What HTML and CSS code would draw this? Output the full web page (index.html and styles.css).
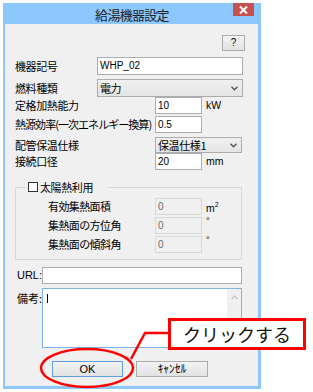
FILE: index.html
```html
<!DOCTYPE html>
<html lang="ja">
<head>
<meta charset="utf-8">
<title>給湯機器設定</title>
<link rel="stylesheet" href="styles.css">
</head>
<body>
<div class="window">
  <div class="titlebar">
    <span></span>
    <div class="title">給湯機器設定</div>
    <div class="close">
      <svg width="9" height="8" viewBox="0 0 9 8"><path d="M1 0.5 L8 7.5 M8 0.5 L1 7.5" stroke="#fff" stroke-width="2" fill="none"/></svg>
    </div>
  </div>
  <div class="client">
    <div class="help-row"><div class="btn help">?</div></div>
    <div class="form">
      <div class="row"><span class="lbl">機器記号</span><div class="field wide">WHP_02</div></div>
      <div class="row"><span class="lbl">燃料種類</span><div class="combo wide"><span>電力</span><svg class="chev" width="7" height="5" viewBox="0 0 7 5"><path d="M0.5 0.8 L3.5 3.8 L6.5 0.8" stroke="#555" stroke-width="1.4" fill="none"/></svg></div></div>
      <div class="row"><span class="lbl lbl-s">定格加熱能力</span><div class="field short">10</div><span class="unit">kW</span></div>
      <div class="row"><span class="lbl lbl-s tight">熱源効率(一次エネルギー換算)</span><div class="field short">0.5</div></div>
      <div class="row"><span class="lbl lbl-s">配管保温仕様</span><div class="combo mid"><span>保温仕様1</span><svg class="chev" width="7" height="5" viewBox="0 0 7 5"><path d="M0.5 0.8 L3.5 3.8 L6.5 0.8" stroke="#555" stroke-width="1.4" fill="none"/></svg></div></div>
      <div class="row"><span class="lbl lbl-s">接続口径</span><div class="field short">20</div><span class="unit">mm</span></div>
    </div>
    <div class="group">
      <div class="legend"><span class="check"></span><span>太陽熱利用</span></div>
      <div class="grp-rows">
        <div class="row"><span class="lbl lbl-g">有効集熱面積</span><div class="field short dis">0</div><span class="unit">m<sup>2</sup></span></div>
        <div class="row"><span class="lbl lbl-g">集熱面の方位角</span><div class="field short dis">0</div><span class="unit deg">°</span></div>
        <div class="row"><span class="lbl lbl-g">集熱面の傾斜角</span><div class="field short dis">0</div><span class="unit deg">°</span></div>
      </div>
    </div>
    <div class="url-row"><span class="lbl-r">URL:</span><div class="field url"></div></div>
    <div class="note-row"><span class="lbl-r note-lbl">備考:</span>
      <div class="memo">
        <div class="memo-text"><span class="caret"></span></div>
        <div class="vscroll"><svg width="7" height="5" viewBox="0 0 7 5"><path d="M0.5 4 L3.5 1 L6.5 4" stroke="#c4c4c4" stroke-width="1.4" fill="none"/></svg></div>
      </div>
    </div>
    <div class="btn-row">
      <div class="btn ok">OK</div>
      <div class="btn cancel">ｷｬﾝｾﾙ</div>
    </div>
  </div>
</div>
<svg class="annot" width="313" height="392" viewBox="0 0 313 392">
  <ellipse cx="87" cy="368" rx="46" ry="19" fill="none" stroke="#ff0000" stroke-width="2.5"/>
  <polyline points="131,359 145,333 170,333" fill="none" stroke="#ff0000" stroke-width="2.5"/>
</svg>
<div class="callout">クリックする</div>
</body>
</html>
```

FILE: styles.css
```css
* { box-sizing: border-box; margin: 0; padding: 0; }
html, body { background: #fff; }
body {
  width: 313px;
  height: 392px;
  position: relative;
  overflow: hidden;
  font-family: "Noto Sans CJK JP", sans-serif;
  font-size: 11px;
  color: #000;
}
.window {
  margin: 3px 0 0 3px;
  width: 258px;
  height: 386px;
  display: flex;
  flex-direction: column;
}
.titlebar {
  height: 21px;
  background: #8cc8fc;
  display: grid;
  grid-template-columns: 1fr auto 1fr;
  align-items: center;
}
.title {
  font-size: 13px;
  letter-spacing: -0.7px;
  color: #222;
  line-height: 1;
  padding-top: 1px;
}
.close {
  justify-self: end;
  align-self: start;
  margin-right: 7px;
  width: 21px;
  height: 13px;
  background: #c75050;
  display: flex;
  align-items: center;
  justify-content: center;
}
.client {
  flex: 1;
  background: #f0f0f0;
  border: solid #8cc8fc;
  border-width: 0 3px 3px 2px;
  padding-top: 11px;
  display: flex;
  flex-direction: column;
}
.help-row { display: flex; justify-content: flex-end; padding-right: 13px; }
.btn {
  height: 16px;
  background: linear-gradient(#f3f3f3, #e2e2e2);
  border: 1px solid #acacac;
  display: flex;
  align-items: center;
  justify-content: center;
  font-family: "Liberation Sans", "Noto Sans CJK JP", sans-serif;
  font-size: 11px;
  line-height: 1;
}
.help { width: 23px; font-size: 10px; }
.form {
  margin-top: 6px;
  padding-left: 10px;
  display: grid;
  grid-template-rows: 22px 18px 19px 21px 16px 17px;
}
.row { display: flex; align-items: center; align-self: start; }
.lbl { width: 82px; letter-spacing: -0.4px; white-space: nowrap; line-height: 1; }
.lbl-s { width: 140px; }
.tight { letter-spacing: -0.95px; }
.lbl-g { width: 107px; letter-spacing: -0.6px; }
.field {
  height: 17px;
  background: #fff;
  border: 1px solid #abadb3;
  padding-left: 2px;
  display: flex;
  align-items: center;
  font-family: "Liberation Sans", sans-serif;
  font-size: 10px;
  line-height: 1;
}
.wide { width: 146px; height: 18px; }
.short { width: 47px; }
.unit { margin-left: 4px; font-family: "Liberation Sans", sans-serif; font-size: 10.5px; line-height: 1; }
.unit sup { font-size: 7px; }
.deg { align-self: flex-start; font-size: 9px; }
.combo {
  height: 17px;
  border: 1px solid #acacac;
  background: linear-gradient(#f0f0f0, #e5e5e5);
  display: flex;
  align-items: center;
  justify-content: space-between;
  padding: 0 4px 0 2px;
  line-height: 1;
  letter-spacing: -0.4px;
}
.combo.wide { height: 18px; }
.combo.mid { width: 87px; height: 16px; }
.group {
  margin: 17px 16px 0 10px;
  height: 73px;
  border: 1px solid #d8d8d8;
}
.legend {
  margin: -7px 0 0 10px;
  padding: 0 16px 0 2px;
  height: 12px;
  width: fit-content;
  background: #f0f0f0;
  display: flex;
  align-items: center;
  gap: 2px;
  line-height: 1;
  letter-spacing: -0.4px;
}
.check { width: 10px; height: 10px; border: 1px solid #333; background: #fff; }
.grp-rows { margin-top: 5px; padding-left: 32px; display: flex; flex-direction: column; gap: 2px; }
.dis { background: #f0f0f0; border-color: #d9d9d9; color: #6d6d6d; }
.url-row { margin-top: 7px; display: flex; align-items: center; }
.lbl-r { width: 37px; text-align: right; line-height: 1; font-family: "Liberation Sans", "Noto Sans CJK JP", sans-serif; }
.url { width: 200px; }
.note-row { margin-top: 4px; display: flex; align-items: flex-start; }
.note-lbl { padding-top: 5px; font-family: "Noto Sans CJK JP", sans-serif; }
.memo {
  width: 200px;
  height: 60px;
  border: 1px solid #7eb4ea;
  background: #fff;
  display: flex;
}
.memo-text { flex: 1; padding: 5px 0 0 4px; }
.caret { display: block; width: 1px; height: 9px; background: #000; }
.vscroll {
  width: 14px;
  background: #f0f0f0;
  display: flex;
  justify-content: center;
  padding-top: 6px;
}
.btn-row { margin-top: 13px; padding-left: 47px; display: flex; gap: 13px; }
.ok { width: 71px; border-color: #5f9ee0; }
.cancel { width: 72px; font-family: "Noto Sans CJK JP", sans-serif; font-size: 11.5px; letter-spacing: 0; }
.annot { position: absolute; left: 0; top: 0; pointer-events: none; }
.callout {
  position: absolute;
  left: 168px;
  top: 318px;
  width: 138px;
  height: 32px;
  border: 3px solid #ff0000;
  background: #fff;
  display: flex;
  align-items: center;
  justify-content: center;
  font-family: "Noto Sans CJK JP", sans-serif;
  font-size: 18px;
  line-height: 1;
  color: #111;
}
```
